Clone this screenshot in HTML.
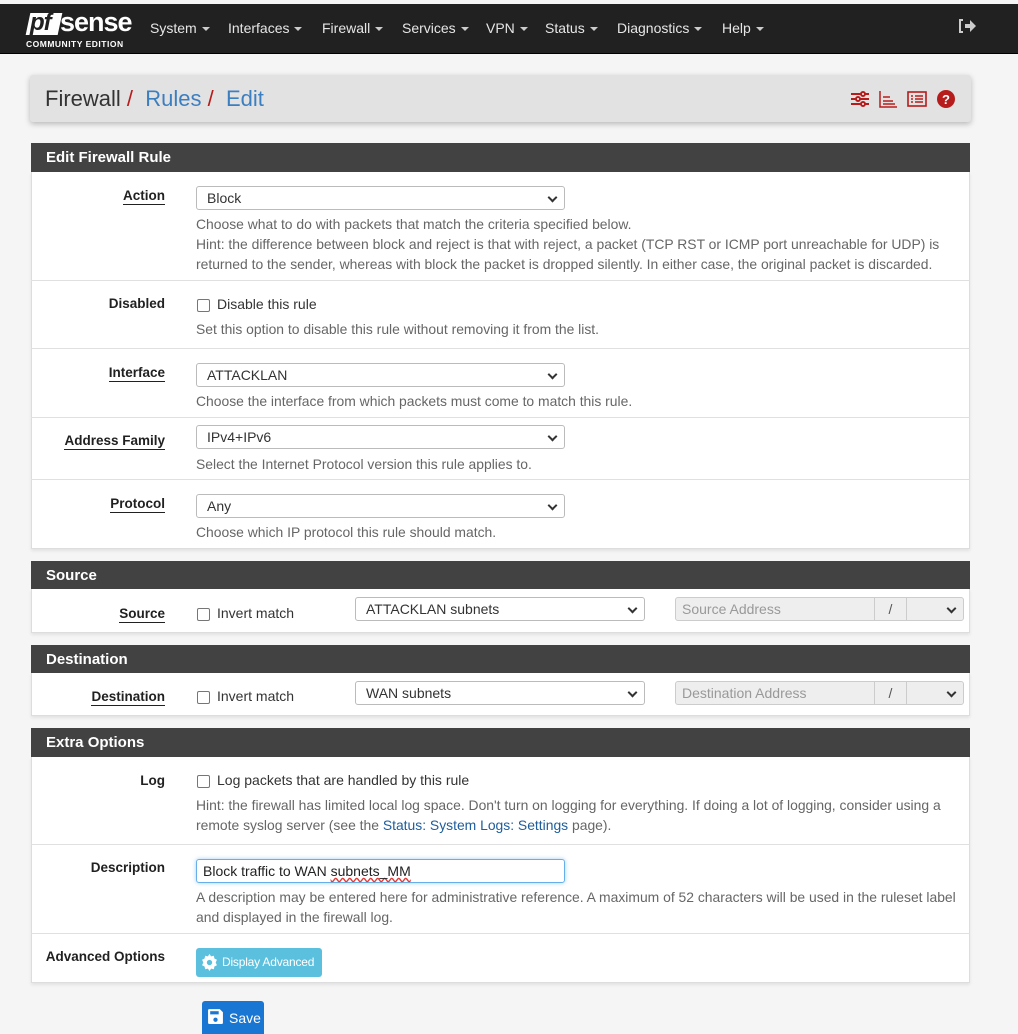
<!DOCTYPE html>
<html><head><meta charset="utf-8"><style>
*{box-sizing:border-box;margin:0;padding:0}
body{width:1018px;height:1034px;background:#f5f5f5;font-family:"Liberation Sans",sans-serif;font-size:14px;color:#212121;position:relative;overflow:hidden}
.a{position:absolute}
.nav{left:0;top:4px;width:1018px;height:50px;background:#212121;border-bottom:1px solid #000}
.nav .m{color:#e6e6e6;font-size:14px;top:16px}
.car{display:inline-block;width:0;height:0;border-left:4px solid transparent;border-right:4px solid transparent;border-top:4px solid #ccc;vertical-align:middle;margin-left:5px}
.bc{left:30px;top:75px;width:941px;height:47px;background:#e2e2e2;border-radius:3px;box-shadow:0 2px 6px rgba(0,0,0,.25)}
.ph{left:31px;width:939px;height:29px;background:#424242;color:#fff;font-weight:bold;font-size:15px;padding:6px 15px}
.pb{left:31px;width:939px;background:#fff;border:1px solid #ddd;border-top:none;box-shadow:0 2px 3px rgba(0,0,0,.08)}
.hr{left:31px;width:939px;height:1px;background:#e0e0e0}
.lb{right:853px;font-weight:bold;font-size:13.5px;color:#212121;white-space:nowrap}
.u{border-bottom:1.5px solid #212121;padding-bottom:1px}
.sel{left:196px;width:369px;height:24px;border:1px solid #bbb;border-radius:3px;background:#fff;padding:3px 10px;font-size:14px;color:#333}
.sel:after{content:"";position:absolute;right:8px;top:7px;width:5px;height:5px;border-right:2px solid #333;border-bottom:2px solid #333;transform:rotate(45deg)}
.h{left:196px;color:#666;font-size:13.9px;line-height:20px;width:775px}
.cb{width:13px;height:13px;border:1px solid #767676;border-radius:2px;background:#fff}
.t{font-size:14px;color:#333}
.lk{color:#1e5c9b}
.dis{background:#eee;border:1px solid #ccc;color:#999;height:24px;padding:3px 6px;font-size:14px}
</style></head><body>
<div class="a nav">
 <div class="a" style="left:26px;top:6px;width:104px;height:40px">
  <div class="a" style="left:2px;top:3px;width:32px;height:22px;background:#fff;transform:skewX(-12deg)"></div>
  <div class="a" style="left:4px;top:-1px;font:italic bold 24px 'Liberation Sans',sans-serif;color:#212121;letter-spacing:-1px">pf</div>
  <div class="a" style="left:34px;top:-3px;font:bold 27px 'Liberation Sans',sans-serif;color:#fff;letter-spacing:-1px">sense</div>
  <div class="a" style="left:0;top:29px;font:bold 8.5px 'Liberation Sans',sans-serif;color:#fff;letter-spacing:0.5px;white-space:nowrap">COMMUNITY EDITION</div>
 </div>
 <span class="a m" style="left:150px">System<span class="car"></span></span>
 <span class="a m" style="left:228px">Interfaces<span class="car"></span></span>
 <span class="a m" style="left:322px">Firewall<span class="car"></span></span>
 <span class="a m" style="left:402px">Services<span class="car"></span></span>
 <span class="a m" style="left:486px">VPN<span class="car"></span></span>
 <span class="a m" style="left:545px">Status<span class="car"></span></span>
 <span class="a m" style="left:617px">Diagnostics<span class="car"></span></span>
 <span class="a m" style="left:722px">Help<span class="car"></span></span>
 <svg class="a" style="left:958px;top:14px" width="20" height="16" viewBox="0 0 20 16"><path d="M5 2H2v12h3" fill="none" stroke="#ccc" stroke-width="2"/><path d="M7 6h5V2l6 6-6 6v-4H7z" fill="#ccc"/></svg>
</div>
<div class="a bc">
 <div class="a" style="left:15px;top:11px;font-size:22px;color:#333;white-space:nowrap">Firewall<span style="color:#b71c1c">&nbsp;/ </span>&nbsp;<span style="color:#3c7fc1">Rules</span><span style="color:#b71c1c">&nbsp;/ </span>&nbsp;<span style="color:#3c7fc1">Edit</span></div>
 <svg class="a" style="left:820px;top:14px" width="110" height="20" viewBox="0 0 110 20">
  <g stroke="#b71c1c" stroke-width="2" fill="none"><path d="M1 5h18M1 10h18M1 15h18"/><circle cx="13" cy="5" r="2" fill="#fff"/><circle cx="8" cy="10" r="2" fill="#fff"/><circle cx="13" cy="15" r="2" fill="#fff"/>
  <path d="M30 2v16h17M33 8h7M33 12h10M33 15h12" stroke-width="1.5"/>
  <rect x="58" y="3" width="18" height="14" stroke-width="1.6"/><path d="M61 7h2M65 7h8M61 10h2M65 10h8M61 13h2M65 13h8" stroke-width="1.5"/></g>
  <circle cx="96" cy="10" r="9" fill="#b71c1c"/><text x="96" y="15" font-size="13" font-weight="bold" fill="#fff" text-anchor="middle" font-family="Liberation Sans">?</text>
 </svg>
</div>

<div class="a ph" style="top:143px">Edit Firewall Rule</div>
<div class="a pb" style="top:172px;height:377px"></div>
<div class="a lb" style="top:188px"><span class="u">Action</span></div>
<div class="a sel" style="top:186px">Block</div>
<div class="a h" style="top:214px">Choose what to do with packets that match the criteria specified below.<br>Hint: the difference between block and reject is that with reject, a packet (TCP RST or ICMP port unreachable for UDP) is returned to the sender, whereas with block the packet is dropped silently. In either case, the original packet is discarded.</div>
<div class="a hr" style="top:280px"></div>
<div class="a lb" style="top:296px">Disabled</div>
<div class="a cb" style="left:197px;top:299px"></div><div class="a t" style="left:217px;top:296px">Disable this rule</div>
<div class="a h" style="top:319px">Set this option to disable this rule without removing it from the list.</div>
<div class="a hr" style="top:348px"></div>
<div class="a lb" style="top:365px"><span class="u">Interface</span></div>
<div class="a sel" style="top:363px">ATTACKLAN</div>
<div class="a h" style="top:391px">Choose the interface from which packets must come to match this rule.</div>
<div class="a hr" style="top:417px"></div>
<div class="a lb" style="top:433px"><span class="u">Address Family</span></div>
<div class="a sel" style="top:425px">IPv4+IPv6</div>
<div class="a h" style="top:454px">Select the Internet Protocol version this rule applies to.</div>
<div class="a hr" style="top:479px"></div>
<div class="a lb" style="top:496px"><span class="u">Protocol</span></div>
<div class="a sel" style="top:494px">Any</div>
<div class="a h" style="top:522px">Choose which IP protocol this rule should match.</div>

<div class="a ph" style="top:561px">Source</div>
<div class="a pb" style="top:589px;height:44px"></div>
<div class="a lb" style="top:606px"><span class="u">Source</span></div>
<div class="a cb" style="left:197px;top:608px"></div><div class="a t" style="left:217px;top:605px">Invert match</div>
<div class="a sel" style="left:355px;width:290px;top:597px">ATTACKLAN subnets</div>
<div class="a dis" style="left:675px;top:597px;width:200px;border-radius:3px 0 0 3px">Source Address</div>
<div class="a dis" style="left:874px;top:597px;width:33px;color:#555;text-align:center">/</div>
<div class="a sel" style="left:906px;width:58px;top:597px;background:#eee;border-color:#ccc;border-radius:0 3px 3px 0"></div>

<div class="a ph" style="top:645px">Destination</div>
<div class="a pb" style="top:673px;height:43px"></div>
<div class="a lb" style="top:689px"><span class="u">Destination</span></div>
<div class="a cb" style="left:197px;top:691px"></div><div class="a t" style="left:217px;top:688px">Invert match</div>
<div class="a sel" style="left:355px;width:290px;top:681px">WAN subnets</div>
<div class="a dis" style="left:675px;top:681px;width:200px;border-radius:3px 0 0 3px">Destination Address</div>
<div class="a dis" style="left:874px;top:681px;width:33px;color:#555;text-align:center">/</div>
<div class="a sel" style="left:906px;width:58px;top:681px;background:#eee;border-color:#ccc;border-radius:0 3px 3px 0"></div>

<div class="a ph" style="top:728px">Extra Options</div>
<div class="a pb" style="top:757px;height:226px"></div>
<div class="a lb" style="top:773px">Log</div>
<div class="a cb" style="left:197px;top:775px"></div><div class="a t" style="left:217px;top:772px">Log packets that are handled by this rule</div>
<div class="a h" style="top:795px">Hint: the firewall has limited local log space. Don't turn on logging for everything. If doing a lot of logging, consider using a remote syslog server (see the <span class="lk">Status: System Logs: Settings</span> page).</div>
<div class="a hr" style="top:844px"></div>
<div class="a lb" style="top:860px">Description</div>
<div class="a" style="left:196px;top:859px;width:369px;height:24px;border:1px solid #66afe9;border-radius:3px;box-shadow:0 0 4px rgba(102,175,233,.6);padding:3px 6px;font-size:14px;color:#222">Block traffic to WAN <span style="text-decoration:underline wavy #e53935">subnets_MM</span></div>
<div class="a h" style="top:887px">A description may be entered here for administrative reference. A maximum of 52 characters will be used in the ruleset label and displayed in the firewall log.</div>
<div class="a hr" style="top:933px"></div>
<div class="a lb" style="top:949px">Advanced Options</div>
<div class="a" style="left:196px;top:948px;width:126px;height:29px;background:#5bc0de;border-radius:3px;color:#fff;font-size:12px;padding:7px 0 0 26px;white-space:nowrap;letter-spacing:-0.2px">Display Advanced
 <svg class="a" style="left:5px;top:6px" width="17" height="17" viewBox="0 0 16 16"><path d="M8 0l1.5 2.2 2.6-.6.5 2.6 2.4 1.2-1.2 2.6 1.2 2.6-2.4 1.2-.5 2.6-2.6-.6L8 16l-1.5-2.2-2.6.6-.5-2.6-2.4-1.2L2.2 8 1 5.4l2.4-1.2.5-2.6 2.6.6z" fill="#fff"/><circle cx="8" cy="8" r="2.5" fill="#5bc0de"/></svg>
</div>
<div class="a" style="left:202px;top:1001px;width:62px;height:33px;background:#1976d2;border-radius:3px 3px 0 0;color:#fff;font-size:14px;padding:9px 0 0 27px">Save
 <svg class="a" style="left:5px;top:7px" width="17" height="17" viewBox="0 0 16 16"><path d="M2 1h10l3 3v10a1 1 0 0 1-1 1H2a1 1 0 0 1-1-1V2a1 1 0 0 1 1-1z" fill="#fff"/><rect x="3" y="3" width="8" height="3" fill="#1976d2"/><circle cx="8" cy="11" r="2" fill="#1976d2"/></svg>
</div>
</body></html>
